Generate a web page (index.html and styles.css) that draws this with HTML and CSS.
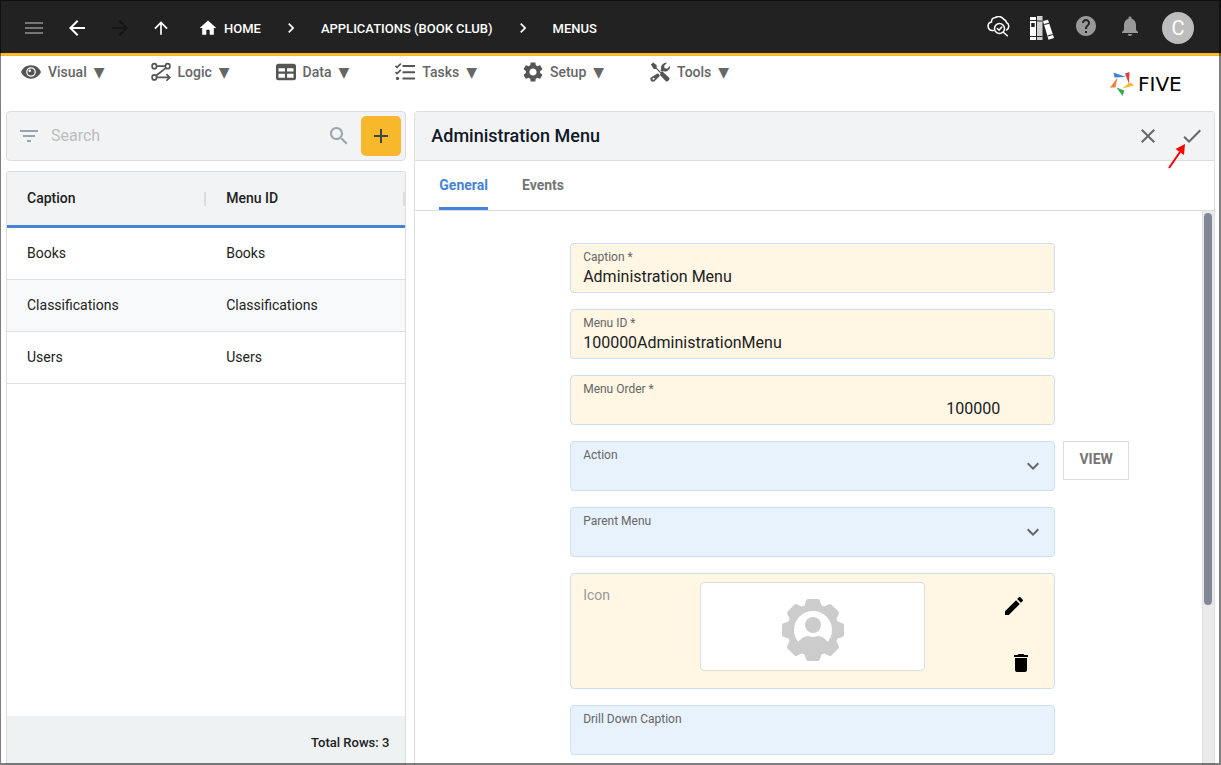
FILE: index.html
```html
<!DOCTYPE html>
<html lang="en">
<head>
<meta charset="UTF-8" />
<meta name="viewport" content="width=device-width, initial-scale=1" />
<title>Five - Menus</title>
<link rel="stylesheet" href="styles.css">
</head>
<body>
<div class="app">
  <header class="topbar">
    <nav class="nav-buttons">
      <button class="icon-btn dim" aria-label="Menu"><svg viewBox="0 0 24 24"><path d="M3 18h18v-2H3v2zm0-5h18v-2H3v2zm0-7v2h18V6H3z"/></svg></button>
      <button class="icon-btn" aria-label="Back"><svg viewBox="0 0 24 24"><path d="M20 11H7.83l5.59-5.59L12 4l-8 8 8 8 1.41-1.41L7.83 13H20v-2z"/></svg></button>
      <button class="icon-btn disabled" aria-label="Forward" disabled><svg viewBox="0 0 24 24"><path d="M12 4l-1.41 1.41L16.17 11H4v2h12.17l-5.58 5.59L12 20l8-8z"/></svg></button>
      <button class="icon-btn up" aria-label="Up"><svg viewBox="0 0 24 24"><path d="M4 12l1.41 1.41L11 7.83V20h2V7.83l5.58 5.59L20 12l-8-8-8 8z"/></svg></button>
    </nav>
    <nav class="breadcrumb">
      <a href="#"><svg viewBox="0 0 24 24"><path d="M10 20v-6h4v6h5v-8h3L12 3 2 12h3v8z"/></svg>HOME</a>
      <svg viewBox="0 0 24 24"><path d="M10 6L8.59 7.41 13.17 12l-4.58 4.59L10 18l6-6z"/></svg>
      <a href="#">APPLICATIONS (BOOK CLUB)</a>
      <svg viewBox="0 0 24 24"><path d="M10 6L8.59 7.41 13.17 12l-4.58 4.59L10 18l6-6z"/></svg>
      <a href="#">MENUS</a>
    </nav>
    <div class="tools">
      <button class="icon-btn" aria-label="Inspect">
        <svg viewBox="0 3 24 24" fill="none" stroke="#fff" stroke-width="1.5" stroke-linecap="round">
          <path class="line" d="M7.5 17.5H6.500A4.300 4.300 0 0 1 5.500 9A4 4 0 0 1 9.500 4.500A6 6 0 0 1 18 6.500A4 4 0 0 1 20.500 9.500A4.200 4.200 0 0 1 20.500 17"/>
          <circle class="line" cx="13.500" cy="15.500" r="5"/>
          <path class="line" d="M11.300 15.500l1.700 1.700 2.800-3.200M17.300 19.300l4 3.500"/>
        </svg>
      </button>
      <button class="icon-btn" aria-label="Library">
        <svg viewBox="0 0 24 24">
          <path d="M0 1h6v23H0z"/><path fill="#d0d0d0" d="M7 0h5.500v24H7z"/><path d="M13 5l5-1.300L24 22l-5.500 1.700z"/>
          <path fill="#222" d="M1.200 7h3.500v4H1.200zM0 4h6v1H0zM0 20h6v1H0zM7 4.500h5.500v1H7zM7 20h5.500v1H7zM14 8l5-1.300.3 1-5 1.300zM17.500 19.500l5-1.500.3 1-5 1.500z"/>
        </svg>
      </button>
      <button class="icon-btn muted" aria-label="Help"><svg viewBox="0 2 24 24"><path d="M12 2C6.480 2 2 6.480 2 12s4.480 10 10 10 10-4.480 10-10S17.520 2 12 2zm1 17h-2v-2h2v2zm2.070-7.750l-.9.920C13.450 12.900 13 13.500 13 15h-2v-.5c0-1.100.45-2.100 1.170-2.830l1.240-1.260c.37-.36.590-.86.590-1.410 0-1.100-.9-2-2-2s-2 .9-2 2H8c0-2.210 1.790-4 4-4s4 1.790 4 4c0 .88-.36 1.680-.93 2.250z"/></svg></button>
      <button class="icon-btn muted" aria-label="Notifications"><svg viewBox="0 2 24 24"><path d="M12 22c1.100 0 2-.9 2-2h-4c0 1.100.89 2 2 2zm6-6v-5c0-3.070-1.640-5.640-4.500-6.320V4c0-.83-.67-1.500-1.500-1.500s-1.500.67-1.500 1.500v.68C7.630 5.360 6 7.920 6 11v5l-2 2v1h16v-1l-2-2z"/></svg></button>
      <button class="avatar">C</button>
    </div>
  </header>

  <div class="menubar">
    <nav class="menus">
      <button><svg viewBox="0 0 24 24"><path fill-rule="evenodd" d="M12 4C6.500 4 2 7.300 0 12c2 4.700 6.500 8 12 8s10-3.300 12-8c-2-4.700-6.500-8-12-8zm0 2.200a5.800 5.800 0 1 1 0 11.600a5.800 5.800 0 0 1 0-11.600z"/><circle cx="12" cy="12" r="4.300"/><circle cx="10.500" cy="10.500" r="1.500" fill="#fff"/></svg>Visual <span>▼</span></button>
      <button><svg viewBox="0 0 24 24"><g fill="none" stroke="#555" stroke-width="2"><ellipse cx="4" cy="5" rx="2.700" ry="3"/><ellipse cx="20" cy="5" rx="2.700" ry="3"/><ellipse cx="4" cy="18.500" rx="2.700" ry="3"/><path d="M7 5h10M18 7L6 16.500M7 18.500h14M18.500 14.500l4 4-4 4"/></g></svg>Logic <span>▼</span></button>
      <button><svg viewBox="0 0 24 24"><path fill-rule="evenodd" d="M3 2h18a3 3 0 0 1 3 3v14a3 3 0 0 1-3 3H3a3 3 0 0 1-3-3V5a3 3 0 0 1 3-3zM3 7.500v4h7.700v-4zm10.300 0v4H21v-4zM3 14v5h7.700v-5zm10.300 0v5H21v-5z"/></svg>Data <span>▼</span></button>
      <button><svg viewBox="0 0 24 24"><path d="M9 3.500h15V6H9zM9 11h15v2.500H9zM9 18.500h15V21H9z"/><circle cx="3" cy="19.700" r="2"/><path fill="none" stroke="#555" stroke-width="2" d="M.5 4.500l2 2L7 2M.5 12l2 2L7 9.500"/></svg>Tasks <span>▼</span></button>
      <button><svg viewBox="2 2 20 20"><path d="M19.140 12.940c.04-.3.060-.61.060-.94s-.02-.64-.07-.94l2.030-1.580c.18-.14.230-.41.120-.61l-1.920-3.320c-.12-.22-.37-.29-.59-.22l-2.390.96c-.5-.38-1.030-.7-1.620-.94l-.36-2.540c-.04-.24-.24-.41-.48-.41h-3.840c-.24 0-.43.17-.47.41l-.36 2.540c-.59.24-1.130.57-1.620.94l-2.390-.96c-.22-.08-.47 0-.59.220L2.740 8.870c-.12.210-.08.470.12.610l2.030 1.580c-.05.3-.09.630-.09.940s.02.640.07.940l-2.030 1.580c-.18.140-.23.410-.12.610l1.920 3.320c.12.220.37.290.59.220l2.390-.96c.5.380 1.030.7 1.620.94l.36 2.540c.05.240.24.410.48.410h3.840c.24 0 .44-.17.470-.41l.36-2.540c.59-.24 1.130-.56 1.620-.94l2.390.96c.22.080.47 0 .59-.22l1.920-3.320c.12-.22.070-.47-.12-.61l-2.010-1.580zM12 15.600c-1.980 0-3.600-1.620-3.600-3.600s1.620-3.600 3.600-3.600 3.600 1.620 3.600 3.600-1.620 3.600-3.600 3.600z"/></svg>Setup <span>▼</span></button>
      <button><svg viewBox="0 0 24 24"><path d="M1 3l3-2.500L8 4v3l5 5 2-.5 8 7.500c1.500 2-2 5.500-4 4l-7-7.500.5-2-5-5H4.500z"/><path fill-rule="evenodd" d="M13.500 9.500c-1.500-5 2.500-9.500 7-8.500L17 4.500l.5 3 3 .5L24 4.500c.8 4.500-3.500 8-7.500 6.500l-1.500.500-3-1zM9.500 13.500l2.500 3-6.500 6.500c-3 2-6.500-1.500-4.500-4.500zM4.200 19a1.200 1.200 0 1 0 .1 2.400a1.200 1.200 0 0 0-.1-2.400z"/></svg>Tools <span>▼</span></button>
    </nav>
    <div class="logo">
      <svg viewBox="0 0 24 24">
        <path fill="#3f82db" d="M3.500.5L16 5 4.500 5.500z"/>
        <path fill="#e63c3c" d="M15 1.500l4.500-1.500-.5 12z"/>
        <path fill="#f9b72b" d="M20 10.500l4.500 3L12 16.500z"/>
        <path fill="#36a852" d="M6.500 15.500l7.800 3-1.600 5.500z"/>
        <path fill="#f4803a" d="M7.500 5.500l-2 10H0z"/>
      </svg>
      <span>FIVE</span>
    </div>
  </div>

  <main class="content">
    <section class="list">
      <div class="search">
        <svg viewBox="0 0 24 24"><path d="M10 18h4v-2h-4v2zM3 6v2h18V6H3zm3 7h12v-2H6v2z"/></svg>
        <input type="text" placeholder="Search" aria-label="Search" />
        <svg viewBox="0 0 24 24"><path d="M15.500 14h-.79l-.28-.27C15.410 12.590 16 11.110 16 9.500 16 5.910 13.090 3 9.500 3S3 5.910 3 9.500 5.910 16 9.500 16c1.610 0 3.090-.59 4.230-1.570l.27.280v.79l5 4.990L20.490 19l-4.990-5zm-6 0C7.010 14 5 11.990 5 9.500S7.010 5 9.500 5 14 7.010 14 9.500 11.990 14 9.500 14z"/></svg>
        <button class="add" aria-label="Add"><svg viewBox="0 0 24 24"><path d="M19 13h-6v6h-2v-6H5v-2h6V5h2v6h6v2z"/></svg></button>
      </div>
      <div class="grid">
        <table>
          <thead>
            <tr><th>Caption</th><th>Menu ID</th></tr>
          </thead>
          <tbody>
            <tr><td>Books</td><td>Books</td></tr>
            <tr><td>Classifications</td><td>Classifications</td></tr>
            <tr><td>Users</td><td>Users</td></tr>
          </tbody>
        </table>
        <div class="grid-footer">Total Rows: 3</div>
      </div>
    </section>

    <section class="detail">
      <div class="detail-header">
        <h1>Administration Menu</h1>
        <button class="icon-btn" aria-label="Cancel"><svg viewBox="0 0 24 24"><path d="M19 6.410L17.590 5 12 10.590 6.410 5 5 6.410 10.590 12 5 17.590 6.410 19 12 13.410 17.590 19 19 17.590 13.410 12z"/></svg></button>
        <button class="icon-btn" aria-label="Save"><svg viewBox="0 0 24 24"><path d="M9 16.170L4.830 12l-1.420 1.410L9 19 21 7l-1.410-1.410z"/></svg></button>
        <svg class="pointer" viewBox="0 0 18 26"><path fill="none" stroke="#f00" stroke-width="2" d="M1 25L12 9"/><path fill="#f00" d="M17 1l-9.500 5 8.500 6z"/></svg>
      </div>
      <div class="tabs">
        <button class="active">General</button>
        <button>Events</button>
      </div>
      <div class="detail-body">
        <form class="form">
          <div class="field required">
            <label for="caption">Caption *</label>
            <input type="text" id="caption" value="Administration Menu" />
          </div>
          <div class="field required">
            <label for="menuId">Menu ID *</label>
            <input type="text" id="menuId" value="100000AdministrationMenu" />
          </div>
          <div class="field required number">
            <label for="menuOrder">Menu Order *</label>
            <input type="text" id="menuOrder" value="100000" />
          </div>
          <div class="field">
            <label for="action">Action</label>
            <select id="action"><option></option></select>
            <svg class="arrow" viewBox="0 0 24 24"><path d="M7.410 8.590L12 13.170l4.590-4.580L18 10l-6 6-6-6 1.410-1.410z"/></svg>
          </div>
          <button type="button" class="view">VIEW</button>
          <div class="field">
            <label for="parentMenu">Parent Menu</label>
            <select id="parentMenu"><option></option></select>
            <svg class="arrow" viewBox="0 0 24 24"><path d="M7.410 8.590L12 13.170l4.590-4.580L18 10l-6 6-6-6 1.410-1.410z"/></svg>
          </div>
          <div class="icon-field">
            <span class="icon-label">Icon</span>
            <div class="preview">
              <svg viewBox="-31 -31 62 62">
                <g fill="#ccc">
                  <circle r="26"/>
                  <path id="tooth" d="M-9-23L-7-29Q-6.500-31-5-31H5Q6.500-31 7-29L9-23V23L7 29Q6.500 31 5 31H-5Q-6.500 31-7 29L-9 23z"/>
                  <use href="#tooth" transform="rotate(45)"/>
                  <use href="#tooth" transform="rotate(90)"/>
                  <use href="#tooth" transform="rotate(135)"/>
                </g>
                <circle r="19" fill="#fff"/>
                <circle cy="-5" r="8" fill="#ccc"/>
                <path fill="#ccc" d="M-15 12Q-10 6-5 6Q0 8 5 6Q10 6 15 12L14 20H-14z"/>
              </svg>
            </div>
            <div class="icon-actions">
              <button type="button" class="icon-btn edit" aria-label="Edit icon"><svg viewBox="0 0 24 24"><path d="M3 17.250V21h3.750L17.810 9.940l-3.750-3.750L3 17.250zM20.710 7.040c.39-.39.390-1.020 0-1.410l-2.340-2.340c-.39-.39-1.020-.39-1.410 0l-1.830 1.830 3.750 3.750 1.830-1.830z"/></svg></button>
              <button type="button" class="icon-btn" aria-label="Delete icon"><svg viewBox="0 0 24 24"><path d="M6 19c0 1.100.9 2 2 2h8c1.100 0 2-.9 2-2V7H6v12zM19 4h-3.500l-1-1h-5l-1 1H5v2h14V4z"/></svg></button>
            </div>
          </div>
          <div class="field">
            <label for="drillDown">Drill Down Caption</label>
            <input type="text" id="drillDown" />
          </div>
        </form>
        <div class="scrollbar"><div class="thumb"></div></div>
      </div>
    </section>
  </main>
</div>
</body>
</html>
```

FILE: styles.css
```css
* {
  box-sizing: border-box;
}
body {
  margin: 0;
  font-family: Roboto, sans-serif;
  font-size: 14px;
  color: #212121;
  background: #fff;
}
/* thin window frame around everything */
body::after {
  content: "";
  position: fixed;
  inset: 0;
  border: solid rgba(0,0,0,0.5);
  border-width: 1px 2px 2px 1px;
  pointer-events: none;
}
button, input, select {
  font-family: inherit;
  font-size: inherit;
  color: inherit;
  border: none;
  background: none;
  padding: 0;
  margin: 0;
  outline: none;
}
button {
  cursor: pointer;
}
svg {
  display: block;
  flex: none;
  width: 24px;
  height: 24px;
  fill: currentColor;
}
.line {
  fill: none;
}
.app {
  height: 100vh;
  display: flex;
  flex-direction: column;
  overflow: hidden;
}

/* top bar */
.topbar {
  flex: none;
  display: flex;
  align-items: center;
  height: 56px;
  padding: 3px 27px 0 22px;
  background: #222;
  border-bottom: 3px solid #fbb829;
  color: #fff;
}
.nav-buttons {
  display: flex;
  align-items: center;
  gap: 19px;
}
.dim {
  color: #777;
}
.disabled {
  color: #151515;
}
.up svg {
  width: 20px;
  height: 20px;
}
.breadcrumb {
  display: flex;
  align-items: center;
  gap: 20px;
  margin-left: 27px;
  font-size: 13px;
  font-weight: 500;
}
.breadcrumb a {
  display: flex;
  align-items: center;
  gap: 6px;
  color: #fff;
  text-decoration: none;
}
.breadcrumb svg {
  width: 20px;
  height: 20px;
}
.tools {
  display: flex;
  align-items: center;
  gap: 20px;
  margin-left: auto;
}
.muted {
  color: #999;
}
.avatar {
  width: 32px;
  height: 32px;
  border-radius: 50%;
  background: #bdbdbd;
  color: #fff;
  font-size: 20px;
}

/* menu bar */
.menubar {
  flex: none;
  display: flex;
  justify-content: space-between;
  height: 55px;
  padding: 6px 23px 0 21px;
}
.menus {
  display: flex;
  align-items: flex-start;
  gap: 46px;
}
.menus button {
  display: flex;
  align-items: center;
  gap: 7px;
  height: 20px;
  color: #666;
  font-weight: 500;
  line-height: 20px;
}
.menus svg {
  width: 20px;
  height: 20px;
  fill: #555;
}
.menus span {
  font-family: "DejaVu Sans", sans-serif;
}
.logo {
  display: flex;
  align-items: center;
  gap: 4px;
  min-width: 88px;
  height: 44px;
  font-family: "DejaVu Sans", sans-serif;
  font-size: 20px;
  color: #000;
}

/* content */
.content {
  flex: 1;
  min-height: 0;
  display: grid;
  grid-template-columns: 1fr 2fr;
  gap: 8px;
  padding: 0 6px;
}
.list {
  display: flex;
  flex-direction: column;
  gap: 10px;
  min-height: 0;
}
.search {
  flex: none;
  display: flex;
  align-items: center;
  gap: 10px;
  height: 50px;
  padding: 0 4px 0 10px;
  background: #f1f3f4;
  border: 1px solid #ddd;
  border-radius: 4px;
  color: #9aa5ac;
}
.search input {
  flex: 1;
  min-width: 0;
  padding-bottom: 2px;
  font-size: 16px;
}
.search input::placeholder {
  color: #bdbdbd;
}
.add {
  display: flex;
  align-items: center;
  justify-content: center;
  width: 40px;
  height: 40px;
  border-radius: 5px;
  background: #f8b82b;
  color: #444;
}
.grid {
  flex: 1;
  min-height: 0;
  display: flex;
  flex-direction: column;
  border: 1px solid #ddd;
  border-bottom: none;
  border-radius: 4px 4px 0 0;
  overflow: hidden;
}
table {
  width: 100%;
  table-layout: fixed;
  border-collapse: separate;
  border-spacing: 0;
}
th {
  height: 56px;
  padding: 0 0 2px 20px;
  text-align: left;
  font-weight: 500;
  background: linear-gradient(#ddd, #ddd) right 20px / 2px 14px no-repeat #f1f3f4;
  border-bottom: 3px solid #4484d8;
}
td {
  height: 52px;
  padding: 0 0 2px 20px;
  border-bottom: 1px solid #e0e0e0;
}
tbody tr:nth-child(even) {
  background: #f8f9fa;
}
.grid-footer {
  flex: none;
  height: 49px;
  margin-top: auto;
  padding: 18px 16px 0;
  background: #eef2f3;
  font-size: 13px;
  font-weight: 500;
  line-height: 18px;
  text-align: right;
}

/* detail */
.detail {
  display: flex;
  flex-direction: column;
  min-height: 0;
  border: 1px solid #ddd;
  border-bottom: none;
  border-radius: 4px 4px 0 0;
}
.detail-header {
  position: relative;
  flex: none;
  display: flex;
  align-items: center;
  gap: 20px;
  height: 49px;
  padding: 0 10px 0 16px;
  background: #f1f3f4;
  border-bottom: 1px solid #ddd;
  color: #666;
}
.detail-header h1 {
  flex: 1;
  margin: 0;
  padding-bottom: 2px;
  font-size: 18px;
  font-weight: 500;
  color: #111827;
}
.pointer {
  position: absolute;
  right: 28px;
  top: 31px;
  width: 18px;
  height: 26px;
}
.tabs {
  flex: none;
  display: flex;
  gap: 34px;
  height: 50px;
  padding: 0 24px;
  border-bottom: 1px solid #ddd;
}
.tabs button {
  padding-bottom: 2px;
  border-top: 3px solid transparent;
  border-bottom: 3px solid transparent;
  color: #757575;
  font-weight: 700;
}
.tabs .active {
  color: #4484d8;
  border-bottom-color: #4484d8;
}
.detail-body {
  flex: 1;
  min-height: 0;
  display: flex;
}
.form {
  flex: 1;
  display: grid;
  grid-template-columns: 1fr minmax(0, 485px) 1fr;
  align-content: start;
  gap: 16px 8px;
  padding: 32px 0 0 8px;
  overflow: hidden;
}
.field {
  grid-column: 2;
  position: relative;
  height: 50px;
  padding: 6px 12px 0;
  background: #e8f2fd;
  border: 1px solid #cddff0;
  border-radius: 4px;
}
.required, .icon-field {
  background: #fff6e4;
}
.field label {
  display: block;
  margin-bottom: 2px;
  font-size: 12px;
  line-height: 14px;
  color: #666;
}
.field input, .field select {
  display: block;
  width: 100%;
  height: 20px;
  font-size: 16px;
  appearance: none;
}
.number input {
  padding-right: 42px;
  text-align: right;
}
.arrow {
  position: absolute;
  right: 9px;
  top: 12px;
  color: #666;
  pointer-events: none;
}
.view {
  grid-column: 3;
  justify-self: start;
  width: 66px;
  height: 39px;
  padding-bottom: 3px;
  border: 1px solid #ddd;
  color: #757575;
  font-weight: 700;
}
.icon-field {
  grid-column: 2;
  display: grid;
  grid-template-columns: 1fr 225px 1fr;
  align-items: start;
  height: 116px;
  padding: 8px 0 0;
  border: 1px solid #cddff0;
  border-radius: 4px;
}
.icon-label {
  padding: 4px 12px;
  line-height: 18px;
  color: #999;
}
.preview {
  display: flex;
  align-items: center;
  justify-content: center;
  height: 89px;
  padding-top: 6px;
  background: #fff;
  border: 1px solid #ddd;
  border-radius: 4px;
}
.preview svg {
  width: 62px;
  height: 62px;
}
.icon-actions {
  display: flex;
  flex-direction: column;
  align-items: flex-end;
  gap: 26px;
  padding: 5px 21px 0 0;
  color: #000;
}
.edit {
  padding: 7px;
}
.scrollbar {
  flex: none;
  width: 12px;
  padding: 2px 2px 0 1px;
  background: #ebebeb;
  border-left: 1px solid #ddd;
}
.thumb {
  height: 71%;
  border-radius: 4px;
  background: #838899;
}
```
